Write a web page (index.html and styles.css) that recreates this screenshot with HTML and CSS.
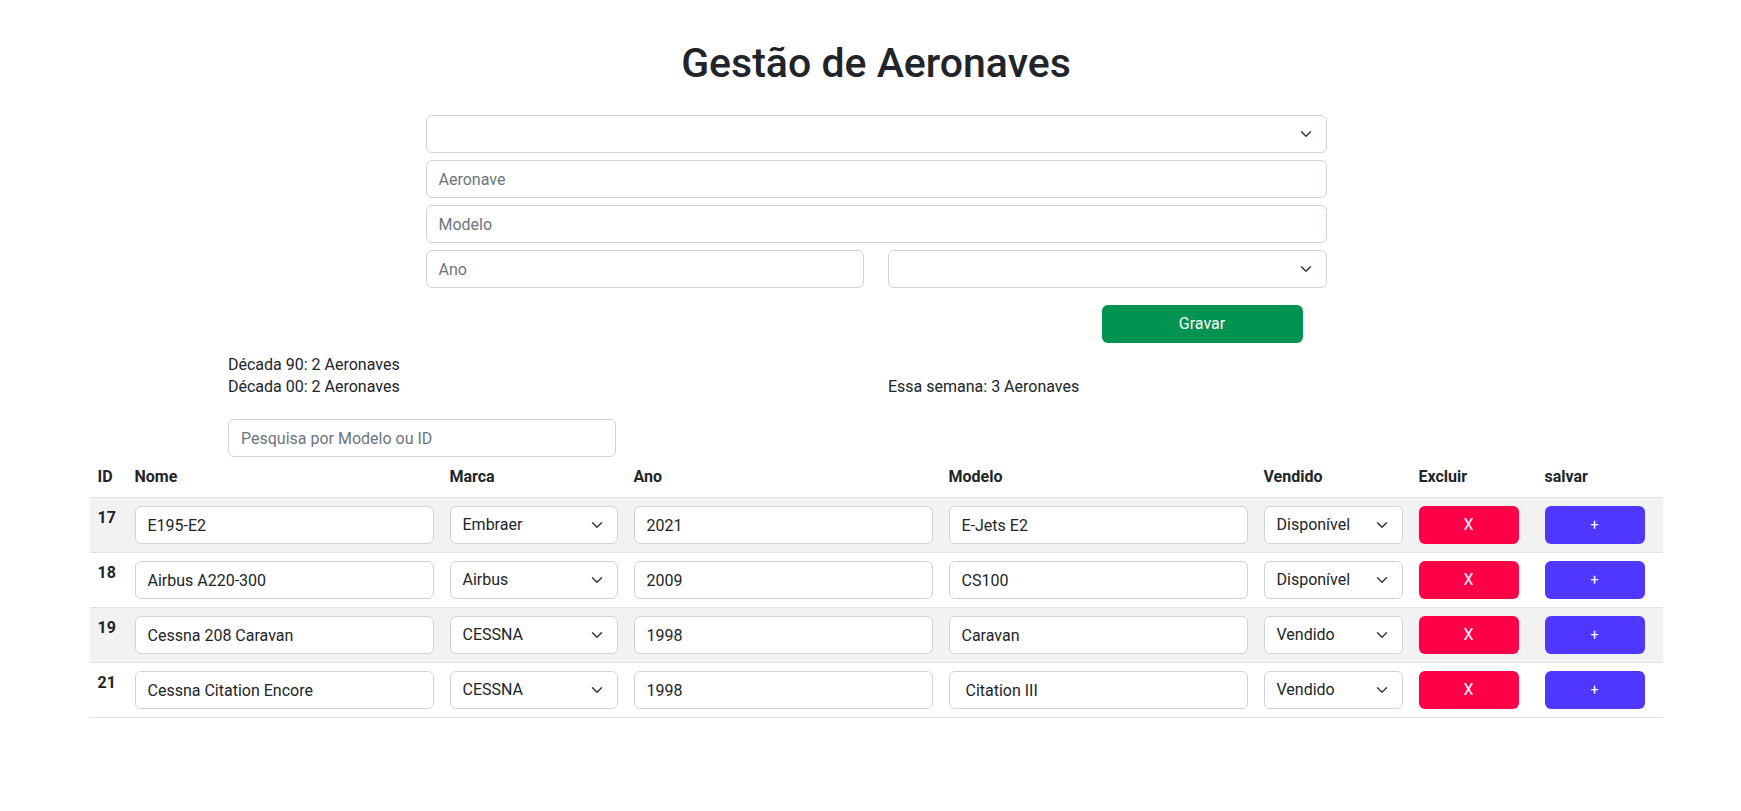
FILE: index.html
```html
<!DOCTYPE html>
<html lang="pt-BR">
<head>
<meta charset="utf-8">
<title>Gestão de Aeronaves</title>
<link rel="stylesheet" href="styles.css">
</head>
<body>
<div class="page">
  <div class="container">
    <h1 class="title">Gestão de Aeronaves</h1>
    <form class="form">
      <div class="control select"><span></span><svg class="chev" width="16" height="12" viewBox="0 0 16 16"><path d="m2 5 6 6 6-6" /></svg></div>
      <input class="control" type="text" placeholder="Aeronave">
      <input class="control" type="text" placeholder="Modelo">
      <div class="form-row">
        <input class="control" type="text" placeholder="Ano">
        <div class="control select"><span></span><svg class="chev" width="16" height="12" viewBox="0 0 16 16"><path d="m2 5 6 6 6-6" /></svg></div>
      </div>
      <div class="actions"><button type="button" class="btn btn-gravar">Gravar</button></div>
    </form>
    <div class="stats">
      <div class="stats-col">
        <div>Década 90: 2 Aeronaves</div>
        <div>Década 00: 2 Aeronaves</div>
      </div>
      <div class="stats-col">
        <div>&nbsp;</div>
        <div>Essa semana: 3 Aeronaves</div>
      </div>
    </div>
    <input class="control search" type="text" placeholder="Pesquisa por Modelo ou ID">
  </div>
  <table class="table">
    <colgroup>
      <col class="c-id"><col class="c-wide"><col class="c-marca"><col class="c-wide"><col class="c-wide"><col class="c-vend"><col class="c-btn"><col class="c-btn">
    </colgroup>
    <thead>
      <tr><th>ID</th><th>Nome</th><th>Marca</th><th>Ano</th><th>Modelo</th><th>Vendido</th><th>Excluir</th><th>salvar</th></tr>
    </thead>
    <tbody>
      <tr class="odd">
        <th>17</th>
        <td><input class="control" type="text" value="E195-E2"></td>
        <td><div class="control select"><span>Embraer</span><svg class="chev" width="16" height="12" viewBox="0 0 16 16"><path d="m2 5 6 6 6-6" /></svg></div></td>
        <td><input class="control" type="text" value="2021"></td>
        <td><input class="control" type="text" value="E-Jets E2"></td>
        <td><div class="control select"><span>Disponível</span><svg class="chev" width="16" height="12" viewBox="0 0 16 16"><path d="m2 5 6 6 6-6" /></svg></div></td>
        <td><button type="button" class="btn btn-del">X</button></td>
        <td><button type="button" class="btn btn-save">+</button></td>
      </tr>
      <tr>
        <th>18</th>
        <td><input class="control" type="text" value="Airbus A220-300"></td>
        <td><div class="control select"><span>Airbus</span><svg class="chev" width="16" height="12" viewBox="0 0 16 16"><path d="m2 5 6 6 6-6" /></svg></div></td>
        <td><input class="control" type="text" value="2009"></td>
        <td><input class="control" type="text" value="CS100"></td>
        <td><div class="control select"><span>Disponível</span><svg class="chev" width="16" height="12" viewBox="0 0 16 16"><path d="m2 5 6 6 6-6" /></svg></div></td>
        <td><button type="button" class="btn btn-del">X</button></td>
        <td><button type="button" class="btn btn-save">+</button></td>
      </tr>
      <tr class="odd">
        <th>19</th>
        <td><input class="control" type="text" value="Cessna 208 Caravan"></td>
        <td><div class="control select"><span>CESSNA</span><svg class="chev" width="16" height="12" viewBox="0 0 16 16"><path d="m2 5 6 6 6-6" /></svg></div></td>
        <td><input class="control" type="text" value="1998"></td>
        <td><input class="control" type="text" value="Caravan"></td>
        <td><div class="control select"><span>Vendido</span><svg class="chev" width="16" height="12" viewBox="0 0 16 16"><path d="m2 5 6 6 6-6" /></svg></div></td>
        <td><button type="button" class="btn btn-del">X</button></td>
        <td><button type="button" class="btn btn-save">+</button></td>
      </tr>
      <tr>
        <th>21</th>
        <td><input class="control" type="text" value="Cessna Citation Encore"></td>
        <td><div class="control select"><span>CESSNA</span><svg class="chev" width="16" height="12" viewBox="0 0 16 16"><path d="m2 5 6 6 6-6" /></svg></div></td>
        <td><input class="control" type="text" value="1998"></td>
        <td><input class="control" type="text" value=" Citation III"></td>
        <td><div class="control select"><span>Vendido</span><svg class="chev" width="16" height="12" viewBox="0 0 16 16"><path d="m2 5 6 6 6-6" /></svg></div></td>
        <td><button type="button" class="btn btn-del">X</button></td>
        <td><button type="button" class="btn btn-save">+</button></td>
      </tr>
    </tbody>
  </table>
</div>
</body>
</html>
```
FILE: styles.css
```css
* { box-sizing: border-box; }

body {
  margin: 0;
  font-family: Roboto, "Liberation Sans", sans-serif;
  font-size: 16px;
  line-height: 24px;
  color: #212529;
  background: #fff;
}

.page {
  padding: 39px 0 40px 11px;
}

.container {
  width: 1296px;
  margin: 0 auto;
}

.title {
  margin: 0 0 28px;
  font-size: 41px;
  line-height: 48px;
  font-weight: 500;
  text-align: center;
}

.form {
  width: 901px;
  margin: 0 auto;
  display: flex;
  flex-direction: column;
  gap: 7px;
}

.control {
  display: block;
  width: 100%;
  height: 38px;
  margin: 0;
  padding: 6px 12px;
  border: 1px solid #ced4da;
  border-radius: 6px;
  background: #fff;
  font: inherit;
  line-height: 24px;
  color: #212529;
  outline: none;
}

.control::placeholder {
  color: #6c757d;
  opacity: 1;
}

.select {
  display: flex;
  align-items: center;
  justify-content: space-between;
  padding-right: 12px;
  white-space: nowrap;
}

.chev {
  flex: none;
}

.chev path {
  fill: none;
  stroke: #343a40;
  stroke-width: 2;
  stroke-linecap: round;
  stroke-linejoin: round;
}

.form-row {
  display: flex;
  gap: 24px;
}

.form-row > * {
  flex: 1 1 0;
  min-width: 0;
}

.actions {
  display: flex;
  justify-content: flex-end;
  padding-right: 24px;
  margin-top: 10px;
}

.btn {
  display: block;
  height: 38px;
  padding: 0;
  border: 0;
  border-radius: 6px;
  color: #fff;
  font: inherit;
  line-height: 24px;
  cursor: pointer;
}

.btn-gravar {
  width: 201px;
  background: #019450;
}

.stats {
  display: grid;
  grid-template-columns: 1fr 1fr;
  column-gap: 24px;
  margin-top: 11px;
  line-height: 22px;
}

.search {
  width: 388px;
  margin-top: 21px;
}

.table {
  width: 1572px;
  margin: 0 auto;
  border-collapse: collapse;
  table-layout: fixed;
}

.c-id { width: 37px; }
.c-wide { width: 315px; }
.c-marca { width: 184px; }
.c-vend { width: 155px; }
.c-btn { width: 126px; }

.table th,
.table td {
  padding: 8px;
  text-align: left;
  vertical-align: top;
  border-bottom: 1px solid #dee2e6;
}

.table thead th {
  font-weight: 700;
  vertical-align: bottom;
}

.table tbody th {
  font-weight: 700;
}

.table tr.odd > * {
  background: #f2f2f2;
}

.btn-del {
  width: 100px;
  background: #ff0048;
}

.btn-save {
  width: 100px;
  background: #4f37ff;
  font-size: 14px;
}
```
